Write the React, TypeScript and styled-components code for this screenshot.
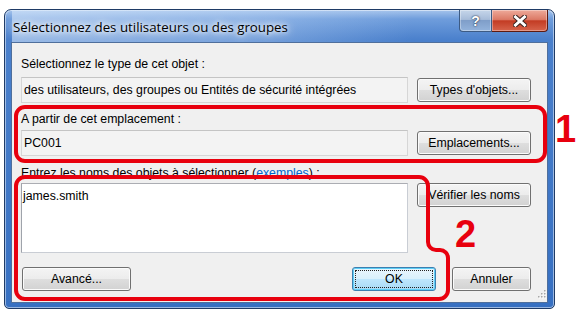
import React from "react";
import styled, { createGlobalStyle } from "styled-components";

const Global = createGlobalStyle`
  html, body { margin: 0; padding: 0; background: #ffffff; }
  body { font-family: "Liberation Sans", Arial, sans-serif; }
  * { box-sizing: border-box; }
`;

const Stage = styled.div`
  position: relative;
  width: 579px;
  height: 312px;
  padding: 9px 0 0 4px;
  overflow: hidden;
`;

const Window = styled.div`
  width: 551px;
  height: 300px;
  display: flex;
  flex-direction: column;
  padding: 0 7px 6px 7px;
  border: 1px solid #1f3b66;
  border-radius: 7px 7px 5px 5px;
  background: linear-gradient(180deg, #a6c4ec 0px, #6f9ddc 9px, #4a80cc 30px, #3770c2 100%);
  box-shadow: inset 0 0 0 1px rgba(255, 255, 255, 0.5);
`;

const TitleBar = styled.div`
  height: 33px;
  display: flex;
  align-items: flex-start;
  justify-content: space-between;
  background: linear-gradient(90deg, rgba(220, 235, 252, 0.55) 0%, rgba(200, 222, 248, 0.35) 45%, rgba(255, 255, 255, 0) 75%);
`;

const Title = styled.div`
  align-self: center;
  padding-left: 1px;
  margin-top: 1px;
  font-family: "Open Sans", "Noto Sans", sans-serif;
  font-size: 13.3px;
  color: #000;
  white-space: nowrap;
  text-shadow: 0 0 4px #ffffff, 0 0 8px #ffffff, 0 0 12px rgba(255, 255, 255, 0.9);
`;

const CaptionGroup = styled.div`
  display: flex;
  height: 22px;
  margin-right: -1px;
`;

const CaptionButton = styled.div<{ $kind: "help" | "close" }>`
  width: ${(p) => (p.$kind === "help" ? 33 : 56)}px;
  height: 22px;
  display: flex;
  align-items: center;
  justify-content: center;
  border: 1px solid ${(p) => (p.$kind === "help" ? "#3d5b84" : "#5e1a10")};
  border-top: none;
  border-left-width: ${(p) => (p.$kind === "help" ? 1 : 0)}px;
  border-radius: ${(p) => (p.$kind === "help" ? "0 0 0 4px" : "0 0 4px 0")};
  background: ${(p) =>
    p.$kind === "help"
      ? "linear-gradient(180deg, #c6d6ea 0%, #a7bcd9 45%, #7f9ec9 50%, #93b3dc 100%)"
      : "linear-gradient(180deg, #eeaa9a 0%, #dc7a66 45%, #c33c24 52%, #d6644c 100%)"};
  box-shadow: inset 0 0 0 1px rgba(255, 255, 255, 0.35);
  font-family: "Liberation Sans", Arial, sans-serif;
  font-weight: bold;
  font-size: 14px;
  color: #fff;
  text-shadow: 0 0 2px #26364f, 0 0 1px #26364f;
`;

const Client = styled.div`
  position: relative;
  flex: 1;
  display: flex;
  flex-direction: column;
  background: #f0f0f0;
  box-shadow: 0 0 0 1px #4f6f9c;
  padding: 14px 16px 0 9px;
  font-size: 12.3px;
  color: #000;
`;

const Label = styled.div<{ $mt: number }>`
  margin-top: ${(p) => p.$mt}px;
  height: 14px;
  line-height: 14px;
  white-space: nowrap;
`;

const Link = styled.span`
  color: #0066cc;
`;

const FieldRow = styled.div<{ $mt: number; $align?: string }>`
  margin-top: ${(p) => p.$mt}px;
  display: grid;
  grid-template-columns: 387px 114px;
  column-gap: 9px;
  align-items: ${(p) => p.$align || "center"};
`;

const ReadBox = styled.div`
  height: 26px;
  display: flex;
  align-items: center;
  padding-left: 2px;
  background: #f3f3f3;
  border: 1px solid #d6d6d6;
  border-top-color: #c4c4c4;
  white-space: nowrap;
`;

const NameBox = styled.div`
  height: 70px;
  padding: 5px 0 0 1px;
  line-height: 14px;
  background: #ffffff;
  border: 1px solid #c9cdd4;
  border-top-color: #abadb3;
  border-left-color: #9fa3ab;
`;

const Button = styled.div<{ $w?: number; $default?: boolean }>`
  ${(p) => (p.$w ? `width: ${p.$w}px;` : "")}
  height: 24px;
  display: flex;
  align-items: center;
  justify-content: center;
  border: 1px solid ${(p) => (p.$default ? "#3c7fb1" : "#707070")};
  border-radius: 3px;
  background: ${(p) =>
    p.$default
      ? "linear-gradient(180deg, #eaf6fd 0%, #d9f0fc 50%, #bee6fd 51%, #a7d9f5 100%)"
      : "linear-gradient(180deg, #f4f4f4 0%, #ececec 50%, #dedede 51%, #d2d2d2 100%)"};
  box-shadow: inset 0 0 0 1px ${(p) => (p.$default ? "#5fcef5" : "#fbfbfb")};
  outline: ${(p) => (p.$default ? "1px dotted #222" : "none")};
  outline-offset: -4px;
  white-space: nowrap;
`;

const ButtonBar = styled.div`
  margin-top: 14px;
  display: flex;
  align-items: center;
  padding-left: 1px;
`;

const Spacer = styled.div`
  flex: 1;
`;

const Gap = styled.div`
  width: 16px;
`;

const Grip = styled.svg`
  position: absolute;
  right: 1px;
  bottom: 2px;
`;

const Overlay = styled.svg`
  position: absolute;
  left: 0;
  top: 0;
  pointer-events: none;
`;

const Marker = styled.div<{ $x: number; $y: number }>`
  position: absolute;
  left: ${(p) => p.$x}px;
  top: ${(p) => p.$y}px;
  font-family: "Liberation Sans", Arial, sans-serif;
  font-weight: bold;
  font-size: 38px;
  line-height: 38px;
  color: #e8000e;
`;

const RED = "#e8000e";

export default function App() {
  return (
    <>
      <Global />
      <Stage>
        <Window>
          <TitleBar>
            <Title>Sélectionnez des utilisateurs ou des groupes</Title>
            <CaptionGroup>
              <CaptionButton $kind="help">?</CaptionButton>
              <CaptionButton $kind="close">
                <svg width="14" height="12" viewBox="0 0 14 12">
                  <path d="M2.5 2 L11.5 10 M11.5 2 L2.5 10" stroke="#3a2320" strokeWidth="5" strokeLinecap="square" />
                  <path d="M2.5 2 L11.5 10 M11.5 2 L2.5 10" stroke="#ffffff" strokeWidth="3" strokeLinecap="square" />
                </svg>
              </CaptionButton>
            </CaptionGroup>
          </TitleBar>
          <Client>
            <Label $mt={0}>Sélectionnez le type de cet objet :</Label>
            <FieldRow $mt={6}>
              <ReadBox>des utilisateurs, des groupes ou Entités de sécurité intégrées</ReadBox>
              <Button>Types d'objets...</Button>
            </FieldRow>
            <Label $mt={9}>A partir de cet emplacement :</Label>
            <FieldRow $mt={4}>
              <ReadBox>PC001</ReadBox>
              <Button>Emplacements...</Button>
            </FieldRow>
            <Label $mt={10}>
              Entrez les noms des objets à sélectionner (<Link>exemples</Link>) :
            </Label>
            <FieldRow $mt={3} $align="start">
              <NameBox>james.smith</NameBox>
              <Button>Vérifier les noms</Button>
            </FieldRow>
            <ButtonBar>
              <Button $w={109}>Avancé...</Button>
              <Spacer />
              <Button $w={84} $default>
                OK
              </Button>
              <Gap />
              <Button $w={79}>Annuler</Button>
            </ButtonBar>
            <Grip width="10" height="10" viewBox="0 0 10 10">
              {[
                [8, 0],
                [8, 3],
                [5, 3],
                [8, 6],
                [5, 6],
                [2, 6],
              ].map(([x, y], i) => (
                <g key={i}>
                  <rect x={x + 1} y={y + 1} width="1.5" height="1.5" fill="#ffffff" />
                  <rect x={x} y={y} width="1.5" height="1.5" fill="#a7a7a7" />
                </g>
              ))}
            </Grip>
          </Client>
        </Window>
        <Overlay width="579" height="312" viewBox="0 0 579 312">
          <rect x="16" y="107" width="529" height="54" rx="9" ry="9" fill="none" stroke={RED} strokeWidth="4" />
          <path
            d="M25 177 H419 A9 9 0 0 1 428 186 V242 A8 8 0 0 0 436 250 H440 A8 8 0 0 1 448 258 V290 A9 9 0 0 1 439 299 H25 A9 9 0 0 1 16 290 V186 A9 9 0 0 1 25 177 Z"
            fill="none"
            stroke={RED}
            strokeWidth="4"
          />
        </Overlay>
        <Marker $x={555} $y={110}>1</Marker>
        <Marker $x={455} $y={215}>2</Marker>
      </Stage>
    </>
  );
}
